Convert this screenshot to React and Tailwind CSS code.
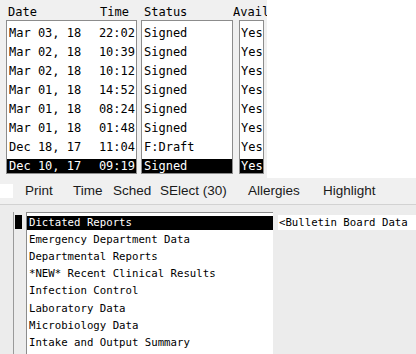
import React from 'react';

const mono = { fontFamily: '"DejaVu Sans Mono", "Liberation Mono", monospace' };

const rows = [
  { date: 'Mar 03, 18', time: '22:02', status: 'Signed', avail: 'Yes' },
  { date: 'Mar 02, 18', time: '10:39', status: 'Signed', avail: 'Yes' },
  { date: 'Mar 02, 18', time: '10:12', status: 'Signed', avail: 'Yes' },
  { date: 'Mar 01, 18', time: '14:52', status: 'Signed', avail: 'Yes' },
  { date: 'Mar 01, 18', time: '08:24', status: 'Signed', avail: 'Yes' },
  { date: 'Mar 01, 18', time: '01:48', status: 'Signed', avail: 'Yes' },
  { date: 'Dec 18, 17', time: '11:04', status: 'F:Draft', avail: 'Yes' },
  { date: 'Dec 10, 17', time: '09:19', status: 'Signed', avail: 'Yes', selected: true },
];

const reports = [
  'Dictated Reports',
  'Emergency Department Data',
  'Departmental Reports',
  '*NEW* Recent Clinical Results',
  'Infection Control',
  'Laboratory Data',
  'Microbiology Data',
  'Intake and Output Summary',
];

// one line inside a list column, 5px gap above a 14px band
const Cell = ({ selected, children, className = '' }) => (
  <div className="mt-[5px] h-[14px]">
    <div className={`h-[14px] leading-[14px] whitespace-nowrap ${selected ? 'bg-black text-white' : 'text-black'} ${className}`}>
      {children}
    </div>
  </div>
);

const App = () => {
  return (
    <div className="w-[416px] h-[354px] overflow-hidden bg-white flex flex-col text-black" style={mono}>
      {/* Top: note list */}
      <div className="flex h-[178px]">
        <div className="w-[267px] bg-[#f0f0f0] flex flex-col overflow-hidden">
          <div className="h-[20px] flex text-[12px] leading-[14px] pt-[5px] whitespace-nowrap">
            <span className="ml-[8px] w-[92px]">Date</span>
            <span className="w-[44px]">Time</span>
            <span className="w-[89px]">Status</span>
            <span className="overflow-hidden w-[34px]">Avail</span>
          </div>
          <div className="flex text-[12px]">
            <div className="ml-[6px] w-[131px] h-[154px] bg-white border border-[#8c8c8c]">
              {rows.map((r, i) => (
                <Cell key={i} selected={r.selected} className="flex justify-between pl-[2px] pr-[1px]">
                  <span>{r.date}</span>
                  <span>{r.time}</span>
                </Cell>
              ))}
            </div>
            <div className="ml-[4px] w-[92px] h-[154px] bg-white border border-[#8c8c8c]">
              {rows.map((r, i) => (
                <Cell key={i} selected={r.selected} className="pl-[2px]">{r.status}</Cell>
              ))}
            </div>
            <div className="ml-[6px] w-[25px] h-[154px] bg-white border border-[#8c8c8c] overflow-hidden">
              {rows.map((r, i) => (
                <Cell key={i} selected={r.selected} className="pl-[1px]">{r.avail}</Cell>
              ))}
            </div>
          </div>
        </div>
        <div className="flex-1 bg-white" />
      </div>

      {/* Toolbar */}
      <div
        className="h-[27px] bg-[#f0f0f0] flex items-center text-[13.5px] text-[#1a1a1a] whitespace-nowrap border-b border-[#d2d2d2]"
        style={{ fontFamily: '"Liberation Sans", Arial, sans-serif' }}
      >
        <span className="w-[13px] h-[14px] bg-white mt-[-1px]" />
        <span className="ml-[12px] w-[48px]">Print</span>
        <span className="w-[40px]">Time</span>
        <span className="w-[47px]">Sched</span>
        <span className="w-[88px]">SElect (30)</span>
        <span className="w-[75px]">Allergies</span>
        <span>Highlight</span>
      </div>

      {/* Bottom: report categories */}
      <div className="flex-1 bg-[#ececec] flex pt-[7px]">
        <div className="ml-[13px] w-[13px] border-l border-[#9a9a9a] pt-[3px]">
          <div className="ml-[1px] w-[7px] h-[14px] bg-black" />
        </div>
        <div className="w-[247px] bg-white border-l border-t border-[#8c8c8c] text-[10.7px] pt-[1px]">
          {reports.map((t, i) => (
            <div key={i} className="h-[17.2px] flex items-center">
              <div className={`w-full h-[14px] leading-[14px] pl-[2px] whitespace-nowrap ${i === 0 ? 'bg-black text-white' : ''}`}>
                {t}
              </div>
            </div>
          ))}
        </div>
        <div className="flex-1 pt-[3px] pl-[5px]">
          <div className="h-[15px] leading-[15px] bg-white text-[10.7px] whitespace-nowrap pl-[1px]">&lt;Bulletin Board Data</div>
        </div>
      </div>
    </div>
  );
};

export default App;
